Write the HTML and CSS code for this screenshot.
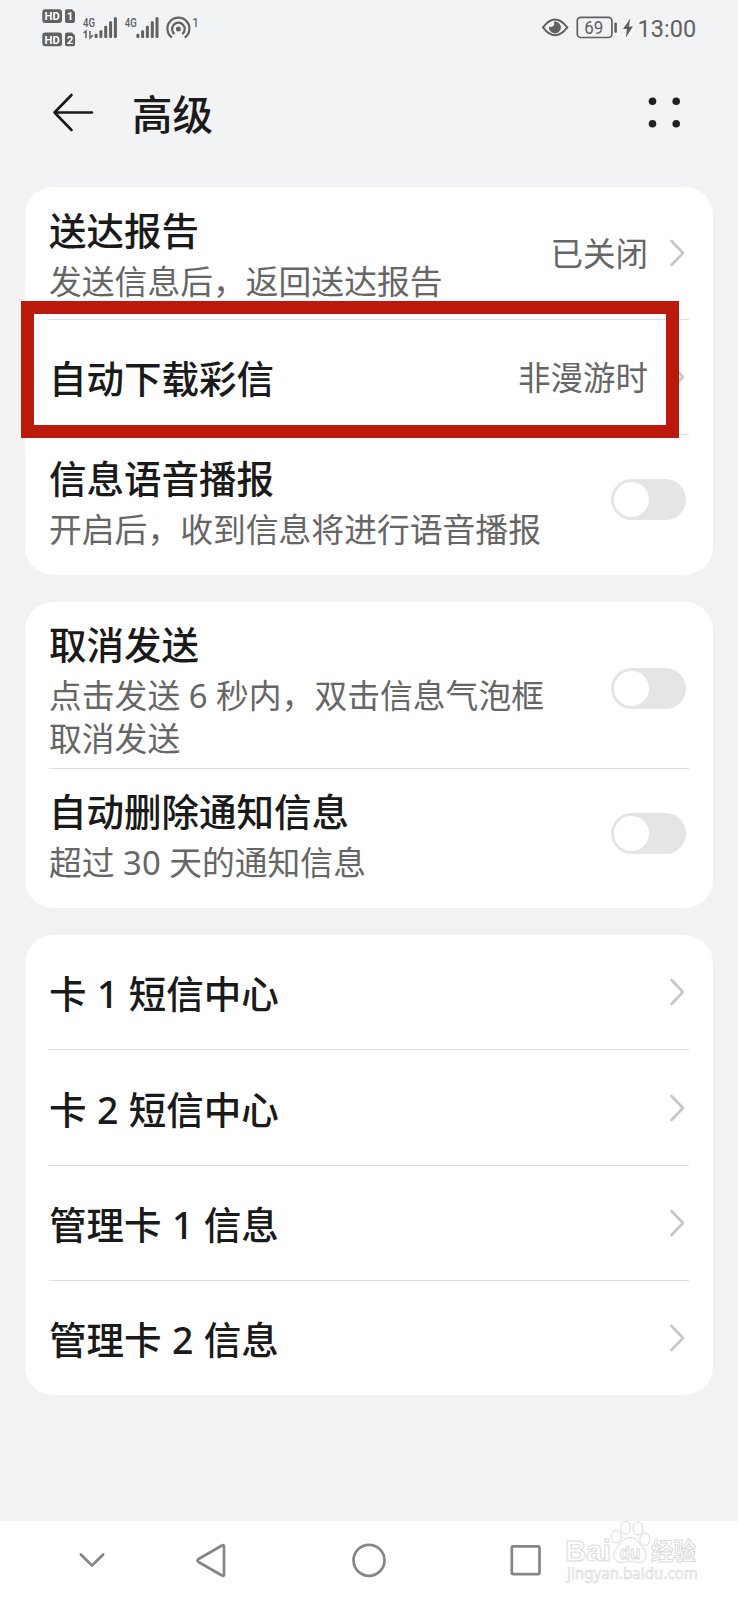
FILE: index.html
```html
<!DOCTYPE html>
<html lang="zh-CN">
<head>
<meta charset="utf-8">
<title>高级</title>
<link rel="stylesheet" href="styles.css">
</head>
<body>
<div class="screen">
  <div class="status">
    <svg class="status-left" width="160" height="56" viewBox="40 0 160 56">
      <g fill="#5f6163">
        <rect x="42.3" y="9.3" width="19.7" height="13.6" rx="3"/>
        <path d="M67 9.300h5l3 3v8.600q0 2-2 2h-6q-2 0-2-2v-9.600q0-2 2-2z"/>
        <rect x="42.300" y="32.600" width="19.700" height="13.600" rx="3"/>
        <path d="M67 32.600h5l3 3v8.600q0 2-2 2h-6q-2 0-2-2v-9.600q0-2 2-2z"/>
        <rect x="94.600" y="33.700" width="3" height="4.300" rx="1"/>
        <rect x="99.400" y="30.300" width="3" height="7.700" rx="1"/>
        <rect x="104.200" y="25.700" width="3" height="12.300" rx="1"/>
        <rect x="109.100" y="21.300" width="3" height="16.700" rx="1"/>
        <rect x="113.900" y="17.300" width="3" height="20.700" rx="1"/>
        <rect x="136.400" y="33.700" width="3" height="4.300" rx="1"/>
        <rect x="141.100" y="30.300" width="3" height="7.700" rx="1"/>
        <rect x="145.900" y="25.700" width="3" height="12.300" rx="1"/>
        <rect x="150.800" y="21.300" width="3" height="16.700" rx="1"/>
        <rect x="155.500" y="17.300" width="3" height="20.700" rx="1"/>
        <circle cx="178.400" cy="29" r="2.500"/>
      </g>
      <g class="badge-text">
        <text x="44.600" y="20.400" textLength="15.200" lengthAdjust="spacingAndGlyphs">HD</text>
        <text x="66.800" y="20.400">1</text>
        <text x="44.600" y="43.700" textLength="15.200" lengthAdjust="spacingAndGlyphs">HD</text>
        <text x="66.800" y="43.700">2</text>
      </g>
      <g class="net-text">
        <text x="83" y="26.600" textLength="12" lengthAdjust="spacingAndGlyphs">4G</text>
        <text x="124.800" y="26.600" textLength="12" lengthAdjust="spacingAndGlyphs">4G</text>
        <text class="hotspot-count" x="191.800" y="27">1</text>
      </g>
      <g fill="none" stroke="#5f6163" stroke-width="1.500">
        <path d="M83.500 33l2.500-2v7M90 31v7l2.800-2.800"/>
        <path d="M172 37.600A11 11 0 1 1 184.800 37.600" stroke-width="2.200"/>
        <path d="M174.600 34A6.300 6.300 0 1 1 182.200 34" stroke-width="2.200"/>
      </g>
    </svg>
    <svg class="status-right" width="160" height="56" viewBox="540 0 160 56">
      <path d="M543 27.400Q555 11.500 567.300 27.400Q555 43.300 543 27.400z" fill="none" stroke="#5f6163" stroke-width="2"/>
      <path d="M555 21.500a6 6 0 1 1-6 5q3.500 1.500 5-1.500q.8-2-.5-3.300z" fill="#5f6163"/>
      <rect x="577.300" y="17.300" width="34.600" height="20.200" rx="3.500" fill="none" stroke="#5f6163" stroke-width="1.700"/>
      <rect x="614.300" y="22.600" width="2.600" height="10.200" rx="1" fill="#5f6163"/>
      <path d="M630.300 18.500l-7.300 10.500h3.900l-1 8.500 7-10.900h-4z" fill="#5f6163"/>
      <text class="battery-text" x="584.300" y="33.900" textLength="19" lengthAdjust="spacingAndGlyphs">69</text>
      <text class="clock" x="637.600" y="36.800" textLength="58.500" lengthAdjust="spacingAndGlyphs">13:00</text>
    </svg>
  </div>

  <header class="header">
    <svg class="back" width="44" height="44" viewBox="0 0 44 44"><path d="M41 22.500H3.500M20.500 5L3.500 22.500L20.500 40" fill="none" stroke="#1a1a1a" stroke-width="2.600" stroke-linecap="round" stroke-linejoin="round"/></svg>
    <h1 class="heading">高级</h1>
    <svg class="more" width="34" height="34" viewBox="0 0 34 34" fill="#1f2021"><circle cx="5.500" cy="6.300" r="3.800"/><circle cx="29.200" cy="6.300" r="3.800"/><circle cx="5.500" cy="28.700" r="3.800"/><circle cx="29.200" cy="28.700" r="3.800"/></svg>
  </header>

  <main class="cards">
    <section class="card card-report">
      <div class="row double">
        <div class="copy"><div class="title">送达报告</div><div class="sub">发送信息后，返回送达报告</div></div>
        <div class="value">已关闭</div>
        <svg class="chevron" width="17" height="28" viewBox="0 0 17 28"><path d="M2.500 2L14 14L2.500 26"/></svg>
      </div>
      <div class="row single">
        <div class="title">自动下载彩信</div>
        <div class="value">非漫游时</div>
        <svg class="chevron" width="17" height="28" viewBox="0 0 17 28"><path d="M2.500 2L14 14L2.500 26"/></svg>
        <div class="highlight"></div>
      </div>
      <div class="row double">
        <div class="copy"><div class="title">信息语音播报</div><div class="sub">开启后，收到信息将进行语音播报</div></div>
        <div class="toggle"><div class="knob"></div></div>
      </div>
    </section>

    <section class="card card-cancel">
      <div class="row triple">
        <div class="copy"><div class="title">取消发送</div><div class="sub">点击发送 6 秒内，双击信息气泡框<br>取消发送</div></div>
        <div class="toggle"><div class="knob"></div></div>
      </div>
      <div class="row double">
        <div class="copy"><div class="title">自动删除通知信息</div><div class="sub">超过 30 天的通知信息</div></div>
        <div class="toggle"><div class="knob"></div></div>
      </div>
    </section>

    <section class="card card-sim">
      <div class="row single"><div class="title">卡 1 短信中心</div><svg class="chevron" width="17" height="28" viewBox="0 0 17 28"><path d="M2.500 2L14 14L2.500 26"/></svg></div>
      <div class="row single"><div class="title">卡 2 短信中心</div><svg class="chevron" width="17" height="28" viewBox="0 0 17 28"><path d="M2.500 2L14 14L2.500 26"/></svg></div>
      <div class="row single"><div class="title">管理卡 1 信息</div><svg class="chevron" width="17" height="28" viewBox="0 0 17 28"><path d="M2.500 2L14 14L2.500 26"/></svg></div>
      <div class="row single"><div class="title">管理卡 2 信息</div><svg class="chevron" width="17" height="28" viewBox="0 0 17 28"><path d="M2.500 2L14 14L2.500 26"/></svg></div>
    </section>
  </main>

  <nav class="nav">
    <svg width="738" height="79" viewBox="0 1521 738 79">
      <g fill="none" stroke="#868686" stroke-width="2.700" stroke-linecap="round" stroke-linejoin="round">
        <path d="M80.800 1554.500L92 1565.500L103.200 1554.500"/>
        <path d="M198.500 1559Q196.500 1560.500 198.500 1562L222 1575.500Q224 1576.500 224 1574.500V1546.500Q224 1544.500 222 1545.500z"/>
        <circle cx="369" cy="1560.300" r="15.500"/>
        <rect x="511.800" y="1546.400" width="27.700" height="27.700" rx="1.500"/>
      </g>
      <g fill="#fff" stroke="#dadada" stroke-width="1">
        <text class="mark-brand" x="565" y="1561" textLength="46" lengthAdjust="spacingAndGlyphs">Bai</text>
        <ellipse cx="616.500" cy="1536.500" rx="5" ry="6.300"/>
        <ellipse cx="625.500" cy="1527.700" rx="5" ry="6.500"/>
        <ellipse cx="638" cy="1528.500" rx="5" ry="6.500"/>
        <ellipse cx="644.800" cy="1539.300" rx="5" ry="6.300"/>
        <path d="M630 1537.500C637 1537.500 639 1544 643 1548C648 1553 647.500 1562.500 638 1562.500C634 1562.500 633 1561 630 1561C627 1561 626 1562.500 622 1562.500C612.500 1562.500 612 1553 617 1548C621 1544 623 1537.500 630 1537.500z"/>
        <text class="mark-du" x="619.500" y="1558.500" textLength="21" lengthAdjust="spacingAndGlyphs">du</text>
        <text class="mark-cn" x="651" y="1560" textLength="45" lengthAdjust="spacingAndGlyphs">经验</text>
      </g>
      <text class="mark-url" x="567" y="1578.500" textLength="131" lengthAdjust="spacingAndGlyphs">jingyan.baidu.com</text>
    </svg>
  </nav>
</div>
</body>
</html>
```
FILE: styles.css
```css
* { box-sizing: border-box; }
body {
  margin: 0;
  font-family: "Noto Sans", "Noto Sans CJK SC", sans-serif;
  background: #f2f2f2;
}
.screen {
  width: 738px;
  height: 1600px;
  display: flex;
  flex-direction: column;
  background: linear-gradient(#f2f3f5 0, #f2f3f5 160px, #f2f2f2 230px);
  overflow: hidden;
}
.status {
  height: 56px;
  display: flex;
  justify-content: space-between;
  padding: 0 38px 0 40px;
}
.badge-text { font: 700 11.5px Roboto, sans-serif; fill: #fff; }
.net-text { font: 500 13.5px Roboto, sans-serif; fill: #5f6163; }
.hotspot-count { font-weight: 400; }
.battery-text { font: 400 18px Roboto, sans-serif; fill: #5f6163; }
.clock { font: 400 23.5px Roboto, sans-serif; fill: #5f6163; }

.header {
  height: 131px;
  display: flex;
  align-items: flex-start;
  padding: 34px 57px 0 51px;
}
.heading {
  margin: -3px auto 0 37px;
  font-size: 40.5px;
  line-height: 56px;
  font-weight: 500;
  color: #1a1a1a;
}
.more { margin-top: 5px; }
.back { flex: none; }

.cards {
  display: flex;
  flex-direction: column;
  gap: 27px;
  padding: 0 25px;
  flex: 1;
}
.card {
  background: #fff;
  border-radius: 28px;
  padding: 0 24px;
}
.card-report { height: 388px; }
.card-cancel { height: 306px; }
.card-sim { height: 460px; }
.row {
  position: relative;
  display: flex;
  align-items: center;
  border-bottom: 1px solid #dedede;
}
.row:last-child { border-bottom-color: transparent; }
.row.double { height: 133px; }
.row.single { height: 115px; }
.card-sim .row.single { height: 115.4px; }
.row.triple { height: 167px; }
.copy { flex: 1; align-self: flex-start; padding-top: 20px; }
.card-report .copy { padding-top: 21px; }
.title {
  flex: 1;
  font-size: 37.5px;
  line-height: 46px;
  font-weight: 500;
  color: #1a1a1a;
  white-space: nowrap;
  word-spacing: .7px;
}
.single .title { padding-top: 4px; }
.sub {
  margin-top: 6px;
  font-size: 32.8px;
  line-height: 43px;
  color: #666;
  white-space: nowrap;
}
.value { padding-top: 2px; font-size: 32.5px; line-height: 44px; color: #666; }
.chevron {
  flex: none;
  margin: 0 3px 0 21px;
  fill: none;
  stroke: #c6c6c6;
  stroke-width: 2.6;
  stroke-linecap: round;
  stroke-linejoin: round;
}
.toggle {
  width: 75px;
  height: 41px;
  margin: 0 3px 3px 0;
  padding: 3px;
  border-radius: 21px;
  background: #e5e5e5;
}
.triple .toggle { margin: 6px 3px 0 0; }
.knob { width: 35px; height: 35px; border-radius: 50%; background: #fff; }
.highlight {
  position: absolute;
  left: -28px;
  top: -19px;
  width: 658px;
  height: 137px;
  border: 13.5px solid #bb190b;
}

.nav { height: 79px; background: #fff; }
.nav svg { display: block; }
.mark-brand { font: 700 30px "Liberation Sans", sans-serif; }
.mark-du { font: 700 19px "Liberation Sans", sans-serif; }
.mark-cn { font: 700 24px "Noto Sans CJK SC", sans-serif; }
.mark-url { font: 400 16px "Noto Sans", sans-serif; fill: #fff; stroke: #dadada; stroke-width: .7px; }
```
